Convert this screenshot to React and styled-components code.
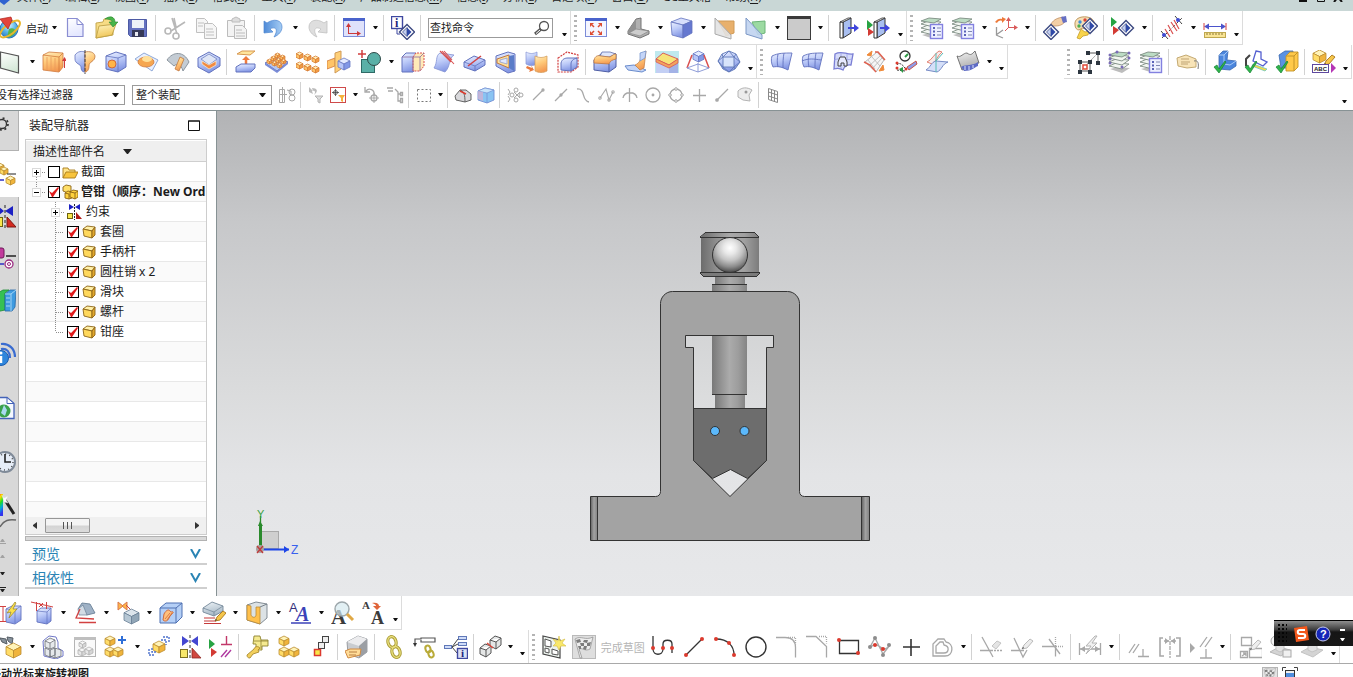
import React from "react";
import styled, { createGlobalStyle, css } from "styled-components";

const GlobalStyle = createGlobalStyle`
  * { box-sizing: border-box; }
  html, body { margin: 0; padding: 0; overflow: hidden; }
  body, button, input, select {
    font-family: "Noto Sans", "Noto Sans CJK SC", sans-serif;
    font-size: 11px;
    color: #1c1c1c;
  }
  button { border: 0; background: none; padding: 0; margin: 0; }
  svg { display: block; flex: none; }
`;

/* ---------- drawing helpers ---------- */

const Cube = ({ x, y, s, t = "#fff3b8", l = "#ffdc68", r = "#f0b43c", k = "#bb8d30" }) => (
  <g stroke={k} strokeWidth="0.8" strokeLinejoin="round">
    <path fill={t} d={`M${x} ${y + s / 4}l${s / 2} ${-s / 4} ${s / 2} ${s / 4} ${-s / 2} ${s / 4}z`} />
    <path fill={l} d={`M${x} ${y + s / 4}l${s / 2} ${s / 4}v${s / 2}l${-s / 2} ${-s / 4}z`} />
    <path fill={r} d={`M${x + s} ${y + s / 4}l${-s / 2} ${s / 4}v${s / 2}l${s / 2} ${-s / 4}z`} />
  </g>
);
const BlueCube = (p) => <Cube t="#e4ebff" l="#b7c6f8" r="#8298e6" k="#6878c4" {...p} />;
const OrangeCube = (p) => <Cube t="#ffedba" l="#ffc468" r="#f29c44" k="#d88038" {...p} />;
const GreyCube = (p) => <Cube t="#f6f6f6" l="#e8e8e8" r="#d6d6d6" k="#b4b4b4" {...p} />;
const WireCube = (p) => <Cube t="#eceef0" l="#d3d6da" r="#b4b8bd" k="#6b6f76" {...p} />;

const Diamond = ({ x, y }) => (
  <g transform={`translate(${x} ${y})`}>
    <path d="M0-7.500L7.500 0 0 7.500-7.500 0z" fill="#fff" stroke="#3b4880" strokeWidth="1.400" />
    <path d="M0-4.500v9L-4.500 0z" fill="#c3cff0" stroke="#2b3a78" strokeWidth="0.700" />
    <path d="M0-4.500v9L4.500 0z" fill="#2f49a8" />
  </g>
);

const Sheets = ({ c = "#7d8c82" }) => (
  <g stroke={c} strokeWidth="0.900">
    <path d="M2 19l8-2 12 1-8 5z" fill="#bdbdbd" stroke="none" />
    {[16, 12, 8].map((y) => (
      <path key={y} d={`M1 ${y}l7-3 13 1-7 5z`} fill="#f2f6f1" />
    ))}
    <path d="M1 5l8-3 12 1-7 4z" fill="#bcdcc4" />
  </g>
);
const ListCard = () => (
  <g>
    <rect x="10.500" y="8.500" width="12" height="14" fill="#eef0ff" stroke="#8381e0" strokeWidth="1.400" />
    <path d="M13 12h2M13 15.500h2M13 19h2" stroke="#5a62b8" strokeWidth="1.800" />
    <path d="M17 12h4M17 15.500h4M17 19h4" stroke="#8088b4" strokeWidth="1" />
  </g>
);
const Dots = ({ at, c = "#dc3a2e", r = 2 }) =>
  at.map(([x, y]) => <circle key={`${x}-${y}`} cx={x} cy={y} r={r} fill={c} />);
const PlayPair = ({ x = 0, y = 0 }) => (
  <g transform={`translate(${x} ${y})`}>
    <path d="M1 2l6 5-6 5z" fill="#27a343" />
    <path d="M3 11l6 4-6 5z" fill="#d33b34" />
  </g>
);
const Tick = () => <path d="M1 17l3-2 2 4 6-8 1 1-7 11z" fill="#2fb54b" stroke="#158132" strokeWidth="0.700" />;
const Pencil = ({ x, y, c = "#f5c64a", k = "#a9761c" }) => (
  <g transform={`translate(${x} ${y})`}>
    <path d="M0 10l2-4 6-6 3 2-6 7z" fill={c} stroke={k} strokeWidth="0.900" />
    <path d="M0 10l2-1-1-1z" fill="#333" />
  </g>
);
const Frame = ({ fill = "#f4f5ff" }) => (
  <g>
    <rect x="1.500" y="2.500" width="21" height="18" fill={fill} stroke="#7c8cd8" />
    <path d="M1 2h22v3H1z" fill="#4a63cc" />
  </g>
);
const Checker = ({ x = 0, y = 0, s = 1 }) => (
  <g transform={`translate(${x} ${y}) scale(${s})`}>
    <path d="M3 4c6-4 10 2 18-2l-3 12c-5 3-8-2-11 0l3 9H8z" fill="#ededed" stroke="#8d8d8d" strokeWidth="0.700" />
    <path d="M4 5l4-1 1 3-4 1zM12 5l4 0-1 3-4-1zM8 8l4 0 0 3-3 0zM15 8l4-1-1 4-3 0zM6 11l3 0 0 3-2 0zM12 11l3 0-1 4-3-1z" fill="#7d7d7d" />
  </g>
);

const G = "#a8a8a8";
const GREY = { stroke: G, strokeWidth: 1.3, fill: "none" };
const INK = { stroke: "#333", strokeWidth: 1.3, fill: "none" };

/* ---------- icons, 24 x 24 ---------- */

const ICONS = {
  nx: (
    <>
      <circle cx="12" cy="13" r="9" fill="url(#gGlobe)" stroke="#2b74b5" />
      <path d="M12 13c4-2 6 0 7 3-3 4-6 6-9 5z" fill="#57b44a" />
      <ellipse cx="13" cy="13" rx="12" ry="5" transform="rotate(-38 13 13)" fill="none" stroke="#e8b62d" strokeWidth="2" />
      <path d="M3 3l11-2 1 3-4 9z" fill="#e2453c" stroke="#b02019" strokeWidth="0.700" />
    </>
  ),
  new: (
    <>
      <path d="M3.500 2.500H13l6 6V20.500H3.500z" fill="url(#gPage)" stroke="#8a8ed2" strokeWidth="1.200" />
      <path d="M13 2.500v6h6z" fill="#fff" stroke="#8a8ed2" />
    </>
  ),
  open: (
    <>
      <path d="M1 7l7-1 1-3 9-1v17L1 22z" fill="#f7dc85" stroke="#bfa146" strokeWidth="0.900" />
      <path d="M1 22L4 10l17-2-4 11z" fill="url(#gYellow)" stroke="#bfa146" strokeWidth="0.900" />
      <path d="M10 3c5-4 10-2 10 3h3l-5 5-4-5h3c0-2-3-3-7-3z" fill="#48b54a" stroke="#2b8731" strokeWidth="0.600" />
    </>
  ),
  save: (
    <>
      <path d="M2.500 3.500h18v17H4.500l-2-2z" fill="#6472c0" stroke="#4d5aa4" />
      <path d="M6 4h12v8H6z" fill="#edf2f8" />
      <path d="M6 14h12v7H6z" fill="#363a58" />
      <path d="M9 16h3v4H9z" fill="#e7e9f0" />
    </>
  ),
  cut: (
    <g stroke="#b8b8b8" fill="none" strokeWidth="1.600">
      <path d="M9 2l5 16M22 6L8 15M11 2l2 9" />
      <circle cx="5" cy="15" r="3" />
      <circle cx="13" cy="20" r="3" />
    </g>
  ),
  copy: (
    <g stroke="#c0c0c0" fill="#f6f6f6">
      <path d="M2.500 2.500h8l3 3v11h-11z" />
      <path d="M10.500 7.500h8l4 4v11h-12z" />
      <path d="M4 7h6M4 10h5M12 13h7M12 16h8M12 19h8" />
    </g>
  ),
  paste: (
    <g stroke="#bcbcbc" fill="#f3f3f3">
      <path d="M2.500 4.500h17v16h-17z" />
      <path d="M7 6V3l4-2 4 2v3z" fill="#ddd" />
      <path d="M9.500 9.500h8l4 4v9h-12z" />
      <path d="M11 14h6M11 17h9M11 20h9" />
    </g>
  ),
  undo: <path d="M2 5l3 2c7-5 15-3 15 4 0 4-3 8-8 10 5-8 1-11-4-8l3 3-9 1z" fill="url(#gUndo)" stroke="#4f86d0" strokeWidth="0.700" />,
  redo: <path d="M22 5l-3 2c-7-5-15-3-15 4 0 4 3 8 8 10-5-8-1-11 4-8l-3 3 9 1z" fill="#dedede" stroke="#c0c0c0" strokeWidth="0.800" />,
  csysWin: (
    <>
      <Frame fill="#dfe2fb" />
      <path d="M6.500 17.500V9M6 17.500h11" stroke="#cc3a3a" fill="none" />
      <path d="M4 11l2.500-4 2.500 4zM15 15l4 2.500-4 2.500z" fill="#cc3a3a" />
    </>
  ),
  info: (
    <>
      <rect x="0.500" y="0.500" width="11" height="12" fill="#fff" stroke="#3f48a0" strokeWidth="1.400" />
      <text x="4" y="11" fontFamily="Liberation Serif, serif" fontWeight="bold" fontSize="12" fill="#20257c">i</text>
      <path d="M6 13v5h3" stroke="#3f48a0" fill="none" />
      <Diamond x={16} y={16} />
    </>
  ),
  fit: (
    <>
      <Frame />
      <path d="M8 9l2 2M16 9l-2 2M8 17l2-2M16 17l-2-2" stroke="#dd4b30" strokeWidth="1.500" />
      <path d="M6 7h4l-4 4zM18 7h-4l4 4zM6 19h4l-4-4zM18 19h-4l4-4z" fill="#dd4b30" />
    </>
  ),
  shade: (
    <>
      <path d="M1 15L9 3l5-1v11l8 2v3l-9 4-12-4z" fill="#b0b0b0" stroke="#747474" />
      <path d="M1 15l8-12v10l-6 4z" fill="#929292" />
      <path d="M9 13l13 2-9 5-11-3z" fill="#cdcdcd" stroke="#868686" strokeWidth="0.700" />
    </>
  ),
  solid: (
    <g stroke="#6272be" strokeWidth="0.800">
      <path d="M1 6l10-4 11 3-9 4z" fill="#d6defc" />
      <path d="M1 6l12 3v13L2 19z" fill="url(#gBlue)" />
      <path d="M13 9l9-4v12l-9 5z" fill="#6578d0" />
    </g>
  ),
  clipA: (
    <>
      <path d="M5 5h16v12l-8 3z" fill="#e8b06c" stroke="#d09a56" />
      <path d="M2 2l16 17v4L2 18z" fill="#e2e2e2" fillOpacity="0.900" stroke="#aaa" />
    </>
  ),
  clipB: (
    <>
      <path d="M8 6l13-1v12l-7 2z" fill="#9cdaa2" stroke="#6cb478" />
      <path d="M2 2l16 17v4L2 18z" fill="#c0d3f0" fillOpacity="0.900" stroke="#7c98c6" />
    </>
  ),
  swatch: (
    <>
      <rect x="0.500" y="0.500" width="23" height="23" fill="#cbcbcb" stroke="#3b3b3b" />
      <path d="M0 0h24v3H0z" fill="#3a3a3a" />
    </>
  ),
  doorOut: (
    <>
      <path d="M7 6l8-4v15l-8 5z" fill="#a9bff0" stroke="#333" />
      <path d="M4 6h3v16H4z" fill="#fff" stroke="#333" />
      <path d="M4 6l8-4h3L7 6z" fill="#fff" stroke="#333" strokeWidth="0.800" />
      <path d="M12 12h7" stroke="#3f46dc" strokeWidth="2" />
      <path d="M18 8l5 4-5 4z" fill="#3f46dc" />
    </>
  ),
  doorPlay: (
    <>
      <path d="M10 6l8-4v15l-8 5z" fill="#a9bff0" stroke="#333" />
      <path d="M7 6h3v16H7z" fill="#fff" stroke="#333" />
      <path d="M7 6l8-4h3l-8 4z" fill="#fff" stroke="#333" strokeWidth="0.800" />
      <path d="M0 4l6 5-6 5z" fill="#27a343" />
      <path d="M1 12l6 4-6 4z" fill="#d33b34" />
      <path d="M13 12h6" stroke="#3f46dc" strokeWidth="2" />
      <path d="M18 8l5 4-5 4z" fill="#3f46dc" />
    </>
  ),
  sheetList: (<><Sheets /><ListCard /></>),
  sheetPins: (
    <>
      <Sheets />
      <Dots c="#7a6cb8" r={1.5} at={[[2, 5], [9, 2], [21, 3], [2, 9], [21, 8], [2, 13], [14, 17]]} />
    </>
  ),
  orient: (
    <>
      <path d="M1 6c2-3 5-4 7-3V1l4 2-4 4V5C6 4 4 5 3 7z" fill="#ed7a3a" />
      <path d="M14.500 12V4M14 11.500h7M14 12l-3 3" stroke="#d95a5a" fill="none" />
      <path d="M12 5l2.500-4 2.500 4zM20 9l4 2.500-4 2.500z" fill="#d95a5a" />
      <path d="M2.500 19v-8M2 19l7 3M2 19l7-5" stroke="#999" strokeWidth="1.300" fill="none" />
    </>
  ),
  handDia: (
    <>
      <path d="M8 8c3-5 7-6 12-7l2 5c-4 4-7 4-12 4z" fill="#f3d0a6" stroke="#bf9164" strokeWidth="0.800" />
      <path d="M18 1l5-1 1 6-4 1z" fill="#6670c4" />
      <Diamond x={8} y={16} />
    </>
  ),
  palette: (
    <>
      <path d="M1 9C0 3 6 0 13 1c6 1 9 5 6 10l-7 2-4-1-3 2c-2 0-4-2-4-5z" fill="#f6dfb6" stroke="#bf9a62" />
      <Dots r={1.7} c="#3f8ed8" at={[[6, 6]]} />
      <Dots r={1.7} c="#dc4638" at={[[11, 4]]} />
      <Dots r={1.7} c="#4cb050" at={[[5, 10]]} />
      <path d="M3 22l4-9 4 3 4-1-1 4-5 1-3 3z" fill="#f8d44c" stroke="#bd931d" strokeWidth="0.700" />
      <g transform="translate(3 -6)"><Diamond x={13} y={16} /></g>
    </>
  ),
  playDia: (<><PlayPair y={-1} x={-1} /><Diamond x={15} y={12} /></>),
  redDim: (
    <>
      <path d="M2 22L22 2" stroke="#444" strokeDasharray="3 2" />
      <path d="M8 9l5 9M11 6l6 9M14 4l5 9M5 13l5 8" stroke="#d95050" strokeWidth="1.200" />
      <path d="M1 15l7 8M15 0l7 8" stroke="#444" />
      <Dots c="#3f4bd4" at={[[4, 19], [18, 4]]} />
    </>
  ),
  ruler: (
    <>
      <path d="M2 10.500h20" stroke="#4b53cc" />
      <path d="M1 10.500l5-3v6zM23 10.500l-5-3v6z" fill="#4b53cc" />
      <path d="M1 7v7M23 7v7" stroke="#d24141" />
      <rect x="1.500" y="16.500" width="21" height="5" fill="#f9e494" stroke="#bfa850" />
      <path d="M4 17v2M7 17v2M10 17v2M13 17v2M16 17v2M19 17v2" stroke="#8d7a38" />
    </>
  ),

  sheet: <path d="M1.500 2l18 4v17l-18-5z" fill="url(#gSheet)" stroke="#555" strokeWidth="1.200" />,
  extrude: (
    <>
      <path d="M1 5l6-3 14 1v14l-4 5-16-2z" fill="url(#gOrange)" stroke="#d07a3c" strokeWidth="0.800" />
      <path d="M1 5l16 2v14M17 7l4-4" fill="none" stroke="#d07a3c" strokeWidth="0.800" />
      <path d="M5 7v13M9 7v14M13 8v13" stroke="#e89a5c" fill="none" strokeWidth="0.800" />
      <path d="M22.500 18V10" stroke="#d13c3c" />
      <path d="M20 11l2.500-4 2.500 4z" fill="#d13c3c" />
    </>
  ),
  revolve: (
    <>
      <path d="M2 5c3-4 7-4 10-3v20c-3 0-4-2-4-5s-6-3-6-8z" fill="url(#gBlue)" stroke="#6272be" strokeWidth="0.800" />
      <path d="M12 2c5-1 9 0 10 4 0 6-6 5-6 10 0 4-2 6-4 6z" fill="url(#gOrange)" stroke="#bf7840" strokeWidth="0.800" />
      <path d="M12 0v24" stroke="#444" strokeDasharray="3 1.500" />
    </>
  ),
  hole: (
    <>
      <path d="M2 6l10-4 10 3v12l-8 5L2 19z" fill="url(#gBlue)" stroke="#6272be" />
      <path d="M2 6l12 2 8-3M14 8v14" fill="none" stroke="#6272be" strokeWidth="0.800" />
      <circle cx="8" cy="14" r="4" fill="#ffb548" stroke="#d06a3c" />
    </>
  ),
  boss: (
    <>
      <path d="M0 9l9-6 14 7-6 11z" fill="#e8f0ff" stroke="#8fa9d8" />
      <ellipse cx="11" cy="12" rx="8" ry="5" fill="#f5a650" stroke="#d07a3c" strokeWidth="0.800" />
      <ellipse cx="12" cy="9" rx="5" ry="3" fill="#ffe09a" />
    </>
  ),
  slot: (
    <>
      <path d="M1 10C7 1 18 1 23 12l-6 9c-2-7-6-8-9-5z" fill="#c4ccd4" stroke="#8c969f" />
      <path d="M9 19l5-12 4 2-5 12z" fill="url(#gOrange)" stroke="#bf7840" strokeWidth="0.800" />
    </>
  ),
  pocket: (
    <>
      <path d="M1 8l11-6 11 6v8l-11 7-11-6z" fill="url(#gBlue)" stroke="#6272be" />
      <path d="M4 9l8-5 8 5-8 6z" fill="#dfe6f6" stroke="#8494cc" />
      <path d="M5 11l7 4 7-4v4l-7 4-7-5z" fill="#f28a40" stroke="#fff0d0" strokeWidth="0.700" />
    </>
  ),
  pull: (
    <>
      <path d="M3 4l5-3h13l-5 4z" fill="#ffe59c" stroke="#d89850" />
      <path d="M12 15V9" stroke="#ef7b3e" strokeWidth="2.500" />
      <path d="M8 10l4-4 4 4z" fill="#ef7b3e" />
      <path d="M2 17l5-3h14v4l-4 4H2z" fill="url(#gBlue)" stroke="#6272be" />
    </>
  ),
  pattern: (
    <>
      <path d="M0 13l11-5 12 4-11 9z" fill="#b4c6f2" stroke="#6272be" />
      <path d="M0 13v2l12 8 11-9v-2l-11 9z" fill="#7a8cd8" />
      {[[2, 9], [6, 6], [10, 3], [7, 11], [11, 8], [15, 5], [12, 13], [16, 9]].map(([x, y]) => (
        <OrangeCube key={`${x}${y}`} x={x} y={y} s={5} />
      ))}
    </>
  ),
  cubes6: (
    <>
      {[[0, 2], [8, 4], [16, 6], [0, 12], [8, 14], [16, 16]].map(([x, y]) => (
        <OrangeCube key={`${x}${y}`} x={x} y={y} s={7} />
      ))}
    </>
  ),
  mirrorBody: (
    <>
      <path d="M0 11l8-3v8l-8 3z" fill="#ffc468" stroke="#d07a3c" strokeWidth="0.800" />
      <path d="M8 3l6-2v18l-6 4z" fill="#ffd078" stroke="#d09a56" />
      <BlueCube x={11} y={8} s={12} />
    </>
  ),
  unite: (
    <>
      <path d="M4 0v8M0 4h8" stroke="#d13c3c" strokeWidth="1.500" />
      <rect x="3.500" y="9.500" width="13" height="13" fill="#5ab0a7" stroke="#2f6a66" />
      <circle cx="16" cy="9" r="6.500" fill="#5ab0a7" stroke="#2f4a48" />
    </>
  ),
  trim: (
    <>
      <path d="M1 7l4-4h10v14l-3 5H1z" fill="url(#gBlue)" stroke="#6272be" />
      <path d="M12 7l3-4h8v13l-4 5h-7z" fill="#ffeab8" stroke="#d95050" strokeDasharray="2 1" />
      <path d="M1 7h11v14M12 7h7v14M19 7l4-4" fill="none" stroke="#8a6a9c" strokeWidth="0.800" />
    </>
  ),
  trimSheet: (
    <>
      <path d="M2 18C6 12 3 6 8 3l14 2c-6 4-3 11-9 17z" fill="url(#gBlue)" stroke="#8493d4" strokeWidth="0.800" />
      <path d="M8 1l11 11M12 1l8 9M10 1l12 13" stroke="#d95050" strokeWidth="1.100" />
    </>
  ),
  splitBody: (
    <>
      <path d="M1 12l10-6 11 4v5l-10 6-11-4z" fill="url(#gBlue)" stroke="#6272be" />
      <path d="M1 12l11 4 10-6M12 16v5" fill="none" stroke="#6272be" strokeWidth="0.800" />
      <path d="M5 16L18 6" stroke="#d24141" strokeWidth="1.500" />
    </>
  ),
  shell: (
    <>
      <path d="M2 6l12-4 7 2v17l-7 2-12-7z" fill="url(#gBlue)" stroke="#6272be" />
      <path d="M3 9l12-4v13l-12-5z" fill="#ffe09a" stroke="#bf7840" />
      <path d="M6 10l7-2v6l-7-2z" fill="#dfe8ff" stroke="#8494cc" strokeWidth="0.700" />
      <path d="M15 6l5-1v16l-5-3z" fill="#5a7cc8" />
    </>
  ),
  offsetFace: (
    <>
      <path d="M1 2c4 2 7 2 11 0v12c-4 2-7 2-11 0z" fill="url(#gBlue)" stroke="#8493d4" strokeWidth="0.700" />
      <path d="M10 6c4 2 8 2 12 0v15c-4 2-8 2-12 0z" fill="url(#gOrange)" stroke="#d09a56" strokeWidth="0.700" />
      <path d="M2 16l5 2-1-3 3 5-5 2 1-2-4-2z" fill="#e8783c" />
    </>
  ),
  scaleBody: (
    <>
      <path d="M2 8l9-6 11 3v12l-7 5H2z" fill="none" stroke="#d24141" strokeDasharray="2 1" strokeWidth="1.200" />
      <path d="M5 20v-7c1-4 4-5 7-5h9v9l-6 4z" fill="url(#gBlue)" stroke="#6272be" />
      <path d="M15 21v-7c0-3 2-5 6-6" fill="none" stroke="#6272be" />
    </>
  ),
  blend: (
    <>
      <path d="M1 10l8-7 14 1v13l-7 5-15-2z" fill="url(#gBlue)" stroke="#4f5ea4" />
      <path d="M9 2h8l6 2-7 3-9-1z" fill="#dfe6fb" stroke="#4f5ea4" strokeWidth="0.700" />
      <path d="M1 10c1-4 4-5 7-4l9 1c3-2 4-3 6-3v5c-4 1-6 2-7 5l-15-1z" fill="url(#gOrange)" stroke="#bf7840" strokeWidth="0.800" />
      <path d="M16 22v-8" stroke="#4f5ea4" />
    </>
  ),
  faceBlend: (
    <>
      <path d="M1 16l9-1 12 5-4 2-14-2z" fill="#c4d5f8" stroke="#6a8ccc" />
      <path d="M11 15c5-2 6-6 6-11l5-3-2 17-4 2z" fill="url(#gOrange)" stroke="#bf7840" strokeWidth="0.700" />
      <path d="M16 3l6-2-1 7-5 3z" fill="#c4d5f8" stroke="#6a8ccc" strokeWidth="0.700" />
    </>
  ),
  chamfer: (
    <>
      <rect x="0" y="1" width="24" height="22" fill="#bfe9ee" />
      <path d="M1 10l13 5v8H1z" fill="#c3cff4" />
      <path d="M14 15l9-5v13h-9z" fill="#a3b2e6" />
      <path d="M1 9L8 3l15 6-9 6z" fill="#f6e47a" stroke="#d95050" strokeWidth="0.900" />
      <path d="M1 9v3l13 6 9-5V9l-9 6z" fill="#f2a35c" stroke="#d95050" strokeWidth="0.700" />
    </>
  ),
  draft: (
    <>
      <BlueCube x={7} y={1} s={11} />
      <path d="M6 5L1 18M18 5l5 13" stroke="#d95050" strokeWidth="1.500" />
      <path d="M1 18l11 4 11-4M12 13v9M1 18l11-4 11 4" stroke="#8493d4" strokeWidth="0.900" fill="none" />
    </>
  ),
  facet: (
    <g stroke="#6078b8" strokeWidth="0.900">
      <path d="M5 4l7-3 7 3 4 8-5 7-6 3-6-3-5-8z" fill="url(#gBlue)" />
      <path d="M6 7h11v10H6z" fill="#d8e4fb" />
      <path d="M12 1L6 7 1 11l5 6 6 5 5-5 6-5-6-5zM5 4l1 3M19 4l-2 3M6 17v2M17 17l1 2" fill="none" />
    </g>
  ),
  surfA: (
    <g stroke="#6272be" strokeWidth="0.900">
      <path d="M2 6C8 3 14 3 22 3l-4 17c-6-3-10-4-15-3-2-4-2-8-1-11z" fill="url(#gBlue)" />
      <path d="M8 4c-1 5-1 9 0 13M14 3c-1 5-1 10-1 15" fill="none" />
    </g>
  ),
  surfB: (
    <g stroke="#6272be" strokeWidth="0.900">
      <path d="M2 6C8 3 14 3 22 3l-4 17c-6-3-10-4-15-3-2-4-2-8-1-11z" fill="url(#gBlue)" />
      <path d="M8 4c-1 5-1 9 0 13M15 3c-1 5-1 10-1 15M1 11c7-3 12-2 19-1" fill="none" />
    </g>
  ),
  surfC: (
    <>
      <path d="M3 4c7-4 11 1 18 0l-2 11c-4-1-7 2-8 5-3-2-6-2-9-1z" fill="#d5dbfa" stroke="#7a7ed4" strokeWidth="1.300" />
      <path d="M2 10c7-3 12 1 18-1M9 3v16M15 4v12" stroke="#9aa0e4" fill="none" strokeWidth="0.800" />
      <path d="M6 16v-4l2-5h5l2 5v4h-3v-3H9v3z" fill="#e7eaff" stroke="#444" />
    </>
  ),
  surfD: (
    <>
      <path d="M2 12L14 2l7 8-8 12z" fill="#f6f6f6" stroke="#b4b4b4" />
      <path d="M5 10l7 9M9 7l8 9M6 16l11-10M9 19l10-11" stroke="#b4b4b4" strokeWidth="0.800" />
      <path d="M12 2l3 0 7 8M1 12l6 3 6 7" stroke="#e0604e" fill="none" strokeWidth="1.400" />
      <path d="M4 5l5-4-1 5zM16 21l4-6 1 5z" fill="#ef8a3a" stroke="#ef8a3a" />
    </>
  ),
  fitCurve: (
    <>
      <circle cx="11" cy="6" r="5" fill="#fff" stroke="#333" strokeWidth="1.300" />
      <path d="M11 7l3-3" stroke="#2c9a44" strokeWidth="2" />
      <path d="M3 15c2-3 5-1 8 3M3 20l8 1" stroke="#333" fill="none" strokeDasharray="2 1" />
      <Dots at={[[3, 13], [12, 19], [3, 18]]} r={1.500} />
      <path d="M5 19l4-2v6z" fill="#2c9a44" />
      <path d="M13 17l9-6 1 3-8 6z" fill="#8f9ce8" stroke="#c64a3a" strokeWidth="0.900" />
    </>
  ),
  cross: (
    <>
      <path d="M2 12C7 10 9 4 14 1l3 1c-5 4-5 9-10 12z" fill="#f8eaea" stroke="#e07868" strokeWidth="0.900" />
      <path d="M1 20c5-3 5-8 10-9l12 1c-6 2-6 8-11 10z" fill="#d5dff8" stroke="#6a80c0" strokeWidth="0.900" />
      <path d="M11 11l7-8M11 3v10l0 9" stroke="#56bab4" strokeWidth="1" />
    </>
  ),
  quilt: (
    <>
      <path d="M1 6c4 2 6-3 10-3 4 3 5 1 8-2l4 12c-4 0-5 5-9 4-3-1-5 2-8 3z" fill="url(#gGrey)" stroke="#666" strokeWidth="0.900" />
      <path d="M5 17c5-3 12-1 17-5v4c-5 2-6 5-14 5z" fill="#5f6cc4" />
      <path d="M9 16v4M13 16v4M17 15v3" stroke="#dfe3ff" />
    </>
  ),
  transform: (
    <>
      <g fill="none" stroke="#555"><path d="M11 3h10v9M3 12h10v9H3z" /></g>
      <path d="M5 20l7-8 8-8" stroke="#999" strokeDasharray="1 1" />
      <rect x="6" y="15" width="4" height="4" fill="#fff" stroke="#e24b3a" strokeWidth="1.500" />
      <g fill="#2d3640">
        {[[9, 1], [19, 1], [19, 11], [1, 10], [11, 10], [1, 20], [11, 20]].map(([x, y]) => (
          <rect key={`${x}-${y}`} x={x} y={y} width="4" height="4" />
        ))}
      </g>
    </>
  ),
  tag: (
    <>
      <path d="M1 8l9-3 10 4v8l-9 1-9-2z" fill="#f8e4b8" stroke="#c4aa72" />
      <path d="M5 9h8M5 12h9M5 14h7" stroke="#bfa474" />
      <path d="M18 11c4-1 5 2 4 8" stroke="#777" fill="none" />
    </>
  ),
  checkPart: (
    <>
      <path d="M6 5l4-4h5l-1 9 9 1v5l-6 4-11-1z" fill="#4b86dd" stroke="#3a67b0" strokeWidth="0.800" />
      <path d="M6 5h5v9M11 14l6 1 6-4M11 5l4-4" stroke="#a9cbf7" fill="none" />
      <Tick />
    </>
  ),
  checkSketch: (
    <>
      <path d="M12 1l5 1v7l6 3-4 4-10-5z" fill="#fff" stroke="#5560d0" strokeWidth="1.300" />
      <path d="M2 16V9l4-4" stroke="#444" strokeWidth="2" fill="none" />
      <path d="M9 14l14 5-2 2-13-5z" fill="#f6d84a" stroke="#6cc8c0" strokeWidth="0.800" />
      <Tick />
    </>
  ),
  checkAsm: (
    <>
      <path d="M4 5l6-4h8v17H6z" fill="#5b92e2" stroke="#3a67b0" strokeWidth="0.800" />
      <path d="M11 6l4-4h8v15l-4 4h-8z" fill="#ffc94a" stroke="#c49428" strokeWidth="0.900" />
      <path d="M11 6h8v15M19 6l4-4" stroke="#c49428" fill="none" />
      <Tick />
    </>
  ),
  cubeAbc: (
    <>
      <Cube x={1} y={0} s={13} />
      <Pencil x={12} y={5} />
      <rect x="0.500" y="14.500" width="16" height="8" fill="#fff" stroke="#5f489e" />
      <text x="2" y="21" fontFamily="Liberation Sans, sans-serif" fontWeight="bold" fontSize="6" fill="#1c1c1c">ABC</text>
      <path d="M19 13l5 5-5 5z" fill="#b536b5" />
    </>
  ),

  dimCube: (
    <>
      <path d="M7 8l6-3h9v14l-6 4-9-2z" fill="url(#gBlue)" stroke="#6272be" strokeWidth="0.900" />
      <path d="M7 8l9 1 6-4M16 9v13" fill="none" stroke="#6272be" strokeWidth="0.700" />
      <path d="M0 5.500h7M0 20.500h7M4 6v14" stroke="#d24141" />
      <path d="M16 1L8 12l4-1-2 6 8-9h-4l3-6z" fill="#fbe14a" stroke="#94812b" strokeWidth="0.700" />
    </>
  ),
  dimLen: (
    <>
      <path d="M7 10l4-3h10v13l-4 3-10-2z" fill="url(#gBlue)" stroke="#6272be" strokeWidth="0.900" />
      <path d="M7 10l10 1 4-4M17 11v12" fill="none" stroke="#6272be" strokeWidth="0.700" />
      <path d="M1 1l22 5M6.500 1v9M16.500 1v7" stroke="#d24141" />
      <path d="M9 2l4 4M13 2l-4 4" stroke="#d24141" />
    </>
  ),
  dimAngle: (
    <>
      <path d="M5 8l4-6 8 1 5 9-8 2z" fill="#9fb2c6" stroke="#6a8096" strokeWidth="0.900" />
      <path d="M5 8l1 6 8 0-4-10z" fill="#d2dce5" stroke="#6a8096" strokeWidth="0.700" />
      <path d="M7 8L3 17l18 1M6 21.500h17" stroke="#d24141" fill="none" strokeWidth="1.300" />
    </>
  ),
  weld: (
    <>
      <path d="M2 1l5 4-5 4zM11 1L6 5l5 4z" fill="#ffb548" stroke="#d87a4c" />
      <path d="M10 4l7 7" stroke="#d24141" />
      <Cube x={8} y={8} s={15} t="#dce5ec" l="#b6c7d4" r="#91a6b7" k="#6a8096" />
    </>
  ),
  section: (
    <>
      <path d="M1 7l6-5h16v14l-6 6H1z" fill="#b4cff6" stroke="#4f70b2" />
      <path d="M1 7h16v15M17 7l6-5" fill="none" stroke="#4f70b2" />
      <path d="M5 13c2-4 5-5 6-3s2 0 3 1-3 3-4 6-4 4-6 2z" fill="#ffc07c" stroke="#d06a3c" />
      <path d="M6 18l5-6M8 19l5-7" stroke="#d06a3c" strokeWidth="0.800" />
    </>
  ),
  note: (
    <>
      <path d="M1 7l9-6 11 4v5l-9 5-11-4z" fill="url(#gSteel)" stroke="#75899a" strokeWidth="0.900" />
      <path d="M1 7l11 4 9-6M12 11v4" fill="none" stroke="#75899a" strokeWidth="0.800" />
      <path d="M2 17h11M2 20h12M2 22.500h17" stroke="#c63a3a" strokeWidth="1.100" />
      <Pencil x={13} y={10} />
    </>
  ),
  holeNote: (
    <>
      <path d="M2 4l9-3 11 2v14l-7 6-13-4z" fill="#dce2e5" stroke="#77818a" strokeWidth="0.900" />
      <path d="M2 4l4 1v9c1 3 5 3 5 0V6l4 0v17L2 19z" fill="#ffc04c" stroke="#b98a38" strokeWidth="0.800" />
      <path d="M15 6l7-3" stroke="#77818a" />
    </>
  ),
  fontA: (
    <>
      <text x="1" y="11" fontFamily="Liberation Sans, sans-serif" fontSize="13" fill="#35307c">A</text>
      <text x="8" y="20" fontFamily="Liberation Serif, serif" fontStyle="italic" fontWeight="bold" fontSize="20" fill="#3b42b8">A</text>
      <path d="M3 22h20" stroke="#3b42b8" strokeWidth="1.500" />
    </>
  ),
  findA: (
    <>
      <text x="0" y="23" fontFamily="Liberation Serif, serif" fontWeight="bold" fontSize="21" fill="#3b3b3b">A</text>
      <circle cx="11" cy="8" r="7" fill="#d6eaf0" fillOpacity="0.700" stroke="#9ca6aa" strokeWidth="1.400" />
      <path d="M16 13l6 6" stroke="#e0a845" strokeWidth="3" />
    </>
  ),
  growA: (
    <>
      <text x="0" y="8" fontFamily="Liberation Serif, serif" fontWeight="bold" fontSize="11" fill="#3b3b3b">A</text>
      <text x="9" y="23" fontFamily="Liberation Serif, serif" fontWeight="bold" fontSize="18" fill="#3b3b3b">A</text>
      <path d="M10 2c5-1 7 1 7 3h2l-4 4-4-4h3c0-1-1-2-4-3z" fill="#e0653a" />
    </>
  ),

  findPart: (
    <>
      <path d="M1 3l6 1 1 5-5-2zM8 2l6 1-1 6-4-3z" fill="#87929c" stroke="#545c64" />
      <Cube x={7} y={8} s={15} />
    </>
  ),
  stackWire: (
    <>
      <path d="M1 6l6-5 7 1 2 5v6l5 3v5l-7 3-12-3z" fill="#fff" stroke="#7078c8" />
      <g fill="#e6e9ec" stroke="#6b6f76" strokeWidth="0.800">
        <path d="M3 6l5-3 5 2v7l-5 2-5-2zM3 6l5 2 5-3M8 8v6" />
        <path d="M3 13l5 2v7l-5-2zM8 15l5-2v7l-5 2zM13 13l6 2v6l-6 2-5-2M13 13v10" />
      </g>
    </>
  ),
  winCubes: (
    <>
      <rect x="1.500" y="2.500" width="21" height="19" fill="#fafafa" stroke="#b4b4b4" />
      <path d="M1 2h22v3H1z" fill="#bfbfbf" />
      <GreyCube x={6} y={6} s={7} /><GreyCube x={5} y={13} s={8} /><GreyCube x={12} y={12} s={8} />
    </>
  ),
  addPart: (
    <>
      <Cube x={1} y={1} s={10} /><Cube x={1} y={12} s={10} /><Cube x={9} y={12} s={10} />
      <path d="M18 1v8M14 5h8" stroke="#2f6fd8" strokeWidth="2" />
    </>
  ),
  movePart: (
    <>
      <Cube x={6} y={6} s={12} />
      <path d="M16 2h6v6M14 5h5v5M2 14v6h6M5 13v4h5" fill="none" stroke="#4c70cc" strokeWidth="1.400" strokeDasharray="2 1" />
    </>
  ),
  mirrorPart: (
    <>
      <path d="M4 1l7 5-7 5zM20 1l-7 5 7 5z" fill="#4447d0" />
      <path d="M12 0v24" stroke="#333" strokeDasharray="3 2" />
      <rect x="2.500" y="14.500" width="7" height="8" fill="#f8e86a" stroke="#7d7220" />
      <path d="M14 13l9 10h-9z" fill="#d0483f" stroke="#8d2a24" strokeWidth="0.800" />
    </>
  ),
  constrain: (
    <>
      <PlayPair x={-1} y={2} />
      <path d="M17.500 1v8M12 9.500h11" stroke="#c2386a" strokeWidth="1.400" />
      <path d="M12 22l6-7M16 22l6-7" stroke="#b03aa0" strokeWidth="1.400" />
    </>
  ),
  wrenchPart: (
    <>
      <path d="M8 1h6l1 4h7v6h-6v4h-6V9l-3 0z" fill="#f5ea90" stroke="#8d8230" strokeWidth="0.900" />
      <path d="M8 6h14M15 5v9" stroke="#8d8230" strokeWidth="0.800" />
      <path d="M1 20l7-6c1-3 4-3 6-1l-2 2 1 2-6 2-3 4c-2 0-3-1-3-3z" fill="#f2cf5c" stroke="#a98a30" strokeWidth="0.900" />
    </>
  ),
  cubes3: (<><Cube x={2} y={1} s={10} /><Cube x={2} y={12} s={10} /><Cube x={12} y={12} s={10} /></>),
  squares: (
    <>
      <rect x="14.500" y="1.500" width="6" height="6" fill="#eee" stroke="#444" />
      <rect x="10.500" y="7.500" width="6" height="6" fill="#eee" stroke="#444" />
      <rect x="6.500" y="14.500" width="6" height="6" fill="#f8e64a" stroke="#dc3a2e" strokeWidth="1.500" />
    </>
  ),
  tagCube: (
    <>
      <path d="M2 7l11-6 9 3v13l-8 6-11-4z" fill="#c9ccd0" stroke="#888c92" strokeWidth="0.800" />
      <path d="M2 7l11-6 9 3-8 7z" fill="#ececee" />
      <path d="M14 11l8-7v13l-8 6z" fill="#9c9fa4" />
      <path d="M0 16l5-2 11 0-1 6-12 3z" fill="#ffdc98" stroke="#d08a42" />
      <path d="M4 17h8M4 20h7" stroke="#b87e42" />
    </>
  ),
  chain: (
    <g fill="none">
      <g stroke="#a89a34" strokeWidth="3.200">
        <ellipse cx="10" cy="7" rx="4" ry="5.500" transform="rotate(-15 10 7)" />
        <ellipse cx="14" cy="17" rx="4" ry="5.500" transform="rotate(-15 14 17)" />
      </g>
      <g stroke="#e6dc7a" strokeWidth="1.500">
        <ellipse cx="10" cy="7" rx="4" ry="5.500" transform="rotate(-15 10 7)" />
        <ellipse cx="14" cy="17" rx="4" ry="5.500" transform="rotate(-15 14 17)" />
      </g>
    </g>
  ),
  routeChain: (
    <>
      <path d="M2 9V4h6v-1h14v4H8V5" fill="#fff" stroke="#555" strokeWidth="1.200" />
      <path d="M0 8h4l-2 4z" fill="#333" />
      <g fill="none" stroke="#b9ab39" strokeWidth="2">
        <ellipse cx="15" cy="14" rx="2.500" ry="3.500" transform="rotate(-20 15 14)" />
        <ellipse cx="18" cy="19" rx="2.500" ry="3.500" transform="rotate(-20 18 19)" />
      </g>
    </>
  ),
  treeInfo: (
    <>
      <path d="M0 12h8l6-8M8 12l6-3M8 12l5 6" stroke="#444" fill="none" />
      <g fill="#cfdcf8" stroke="#6078b8">
        <rect x="14.500" y="1.500" width="8" height="3" /><rect x="14.500" y="7.500" width="8" height="3" /><rect x="0.500" y="10.500" width="7" height="3" />
      </g>
      <rect x="13.500" y="13.500" width="10" height="10" fill="#dde2f4" stroke="#3f48a0" strokeWidth="1.400" />
      <text x="17" y="22" fontFamily="Liberation Serif, serif" fontWeight="bold" fontSize="11" fill="#20257c">i</text>
    </>
  ),
  wirePair: (
    <>
      <g fill="#e4e6e6" stroke="#555" strokeWidth="1">
        <path d="M11 5l5-4 6 2v7l-5 4-6-3zM11 5l6 2 5-4M17 7v7" />
        <path d="M1 13l5-4 6 2v7l-5 4-6-3zM1 13l6 2 5-4M7 15v7" />
      </g>
      <path d="M8 8l6 5" stroke="#dc4a3e" strokeWidth="1.500" />
    </>
  ),
  sketchNew: (
    <>
      <path d="M1 1l17 4v18L1 19z" fill="#edf3ee" stroke="#444" strokeWidth="1.200" />
      <path d="M3 4l6 2v6l-6-1zM3 13l4 1v4l-4-1zM10 14l6 2v4l-6-1z" fill="#fff" stroke="#555" />
      <path d="M17 1l1 5 5-2-3 4 4 3-5 0-2 4-2-4-4 0 3-3-3-4 5 2z" fill="#f9e86a" stroke="#d4bc42" strokeWidth="0.600" />
    </>
  ),
  finish: (
    <>
      <rect x="0.500" y="0.500" width="23" height="23" fill="#dedede" stroke="#bababa" />
      <Checker />
    </>
  ),
  profile: (
    <>
      <path d="M2 1v13c0 7 10 7 10 0V9c0-5 9-5 9 0v9" {...INK} />
      <Dots at={[[2, 13], [12, 13], [21, 13]]} />
    </>
  ),
  line: (<><path d="M4 20L20 4" {...INK} /><Dots at={[[4, 20], [20, 4]]} /></>),
  arc: (<><path d="M3 4c12 0 18 7 18 16" {...INK} /><Dots at={[[3, 4], [16, 8], [21, 20]]} /></>),
  circle: <circle cx="12" cy="12" r="10" {...INK} strokeWidth={1.400} />,
  fillet: (<><path d="M1 2.500h9c7 0 10.500 4 10.500 10v10" {...GREY} /><path d="M13 2.500h7.500v7" {...GREY} strokeDasharray="1 1" /></>),
  cham: (<><path d="M0 1.500h10l10.500 10v11" {...GREY} /><path d="M13 1.500h7.500v7" {...GREY} strokeDasharray="1 1" /></>),
  rect: (<><path d="M2.500 5.500h19v13h-19z" {...INK} /><Dots at={[[2, 5], [21, 18]]} /></>),
  spline: (
    <>
      <path d="M2 12L7 3l8 16 7-9M3 12c4-5 7-1 11 1s5 0 8-3" {...GREY} />
      <Dots c="#8d8d8d" at={[[2, 12], [7, 3], [15, 20], [21, 10]]} />
      <Dots at={[[7, 10], [15, 14]]} />
    </>
  ),
  point: <path d="M12 4v17M4 12h17" {...INK} strokeWidth={1.600} />,
  offset: (
    <g {...GREY}>
      <path d="M3 21V9l5-5h6l2 3c8 1 8 14-1 14z" />
      <path d="M6 18v-7l4-4h3l1 3c6 1 5 8 0 8z" />
    </g>
  ),
  qtrim: (
    <>
      <path d="M3 2l11 20M1 15.500h11" {...GREY} /><path d="M12 15.500h11" {...GREY} strokeDasharray="2 1" />
      <path d="M13 11l5-5 4 2-5 6z" fill="#e4e4e4" stroke="#c4c4c4" />
    </>
  ),
  qext: (<><path d="M1 15.500h13M4 3l9 19L17 15" {...GREY} /><Pencil x={12} y={4} c="#ececec" k="#b4b4b4" /></>),
  corner: (<><path d="M1 11.500h13.500v10M8 4l11 15" {...GREY} /><path d="M14.500 2v9.500H23" {...GREY} strokeDasharray="1 1" /></>),
  autoDim: (
    <>
      <path d="M1.500 8v12M22.500 8v12M2 14h20" {...GREY} />
      <path d="M2 14l5-3v6zM22 14l-5-3v6z" fill={G} />
      <path d="M17 1L8 11l5 0-5 8 11-11h-5l5-7z" fill="#f0f0f0" stroke="#b4b4b4" />
    </>
  ),
  geoCon: <path d="M2 18L8 9M6 18l6-9M16 14v7M11 21.500h11" {...GREY} />,
  symm: (
    <>
      <path d="M5 3H2v18h4M18 3h4v18h-4" {...GREY} strokeWidth={1.600} /><path d="M12 1v22" {...GREY} strokeDasharray="4 1" />
      <path d="M6 6h5M18 6h-5" {...GREY} /><path d="M7 3v6l4-3zM17 3v6l-4-3z" fill={G} />
    </>
  ),
  autoCon: (<><path d="M1 8l5 5-5 5z" fill={G} /><path d="M11 12l7-10M16 12l7-10M17 14v9M11 23h12" {...GREY} /></>),
  convert: (
    <>
      <path d="M3.500 2.500h10v8h-10zM11.500 13.500h13v9h-13zM2.500 16.500h7v6h-7z" {...GREY} /><path d="M4 21l4-3M5 18h3v3" {...GREY} />
      <Pencil x={12} y={5} c="#eee" k="#b4b4b4" />
    </>
  ),
  lockPart: (
    <>
      <circle cx="7" cy="6" r="5" fill="#f4f4f4" stroke={G} />
      <path d="M1 17l9-5 11 3-9 6z" fill="#d4d4d4" stroke="#b8b8b8" /><path d="M7 8h8v7l-4 2-4-2z" fill="#e2e2e2" stroke="#c4c4c4" />
      <rect x="14" y="15" width="8" height="7" fill="#f0f0f0" stroke={G} />
    </>
  ),
  partDown: (<><path d="M1 17l9-5 13 3-10 7z" fill="#d4d4d4" stroke="#c4c4c4" /><path d="M8 6l4-2 5 2v9l-5 2-4-2z" fill="#e2e2e2" stroke="#c4c4c4" /></>),

  /* side bar, 24 x 24 */
  gear: (
    <>
      <circle cx="10" cy="12" r="4.500" fill="none" stroke="#333" strokeWidth="1.300" />
      <circle cx="10" cy="12" r="6" fill="none" stroke="#333" strokeWidth="1.700" strokeDasharray="2 2.700" />
    </>
  ),
  asmNav: (
    <>
      <Cube x={3} y={1} s={9} /><Cube x={8} y={5} s={8} /><Cube x={14} y={14} s={9} />
      <path d="M15 12h9" stroke="#222" /><path d="M8 18h4" stroke="#2b2fc4" strokeWidth="1.500" />
    </>
  ),
  conNav: (
    <>
      <path d="M6 1l6 5-6 5zM21 1l-8 5 8 5z" fill="#1c20c4" />
      <path d="M13 0v24" stroke="#222" strokeDasharray="3 2" />
      <rect x="5.500" y="12.500" width="5" height="9" fill="#f8e64a" stroke="#6d6210" />
      <path d="M15 12l9 10h-9z" fill="#d42a20" stroke="#7d1612" />
    </>
  ),
  reuse: (
    <>
      <rect x="4" y="2" width="8" height="10" rx="2" fill="#c23a9c" stroke="#6e1858" />
      <path d="M14 10h10" stroke="#222" strokeWidth="1.500" /><path d="M8 18h4" stroke="#2b2fc4" strokeWidth="1.500" />
      <circle cx="17" cy="18" r="4" fill="#fff" stroke="#9a2a80" strokeWidth="1.300" /><circle cx="17" cy="18" r="1.500" fill="none" stroke="#9a2a80" />
    </>
  ),
  books: (
    <>
      <path d="M4 5l7-4h6l-4 3v17l-9 2z" fill="#36c052" stroke="#1d8a33" strokeWidth="0.800" />
      <path d="M13 5l5-4h6l-1 17-3 4h-7z" fill="#3f9be0" stroke="#2468a8" strokeWidth="0.800" />
      <path d="M13 5h6v17M19 5l5-4M14 9h4M14 13h4M14 17h4" fill="none" stroke="#a4d4f4" />
    </>
  ),
  hd3d: (
    <>
      <g fill="none" stroke="#3a6cd0" strokeWidth="2.200"><path d="M9 7c6-1 9 3 9 9M9 2c8-1 14 5 14 13" /></g>
      <circle cx="9" cy="16" r="7.500" fill="#2f86dc" stroke="#1a5cae" />
      <path d="M9 14v7" stroke="#fff" strokeWidth="2.500" /><circle cx="9" cy="11" r="1.500" fill="#fff" />
    </>
  ),
  web: (
    <>
      <path d="M3 1.500h12l7 6v15H3z" fill="#f5f8ff" stroke="#4463b8" strokeWidth="1.300" /><path d="M15 1.500v6h7z" fill="#fff" stroke="#4463b8" />
      <circle cx="12" cy="15" r="6.500" fill="#3aa14c" /><path d="M12 9l3 5-2 6-4-3z" fill="#a9daf0" />
    </>
  ),
  clock: (
    <>
      <circle cx="13" cy="12" r="10" fill="#e6edf7" stroke="#7f8a98" strokeWidth="2" />
      <circle cx="13" cy="12" r="8" fill="none" stroke="#444" strokeWidth="1.300" strokeDasharray="1 3.190" />
      <path d="M13 4v8h6" stroke="#222" fill="none" strokeWidth="1.600" />
    </>
  ),
  roles: (
    <>
      <path d="M6 1h5v22H6z" fill="url(#gRainbow)" />
      <path d="M13 7l9 14" stroke="#222" strokeWidth="3" /><path d="M10 2l2 3 4-2-2 4 2 3-4-1z" fill="#fff" stroke="#ddd" strokeWidth="0.500" />
    </>
  ),
};

/* ---------- icons, 18 x 18 ---------- */

const SMALL = {
  asmFilter: <g {...GREY} strokeWidth={1}><path d="M1.500 3.500h5v13h-5zM1 8.500h8M4.500 1v15M9 4l4 1v4" /><circle cx="14" cy="6" r="3" /><circle cx="14" cy="12" r="3" /></g>,
  funnelUndo: <g><path d="M2 1l4 4-1-3c5 0 7 3 2 7 2-3 1-5-2-4l1 3-4-2z" fill="#bbb" /><path d="M8 10h8l-3 3v4l-2-1v-3z" fill="#ddd" stroke="#b4b4b4" /></g>,
  snapFilter: <g><rect x="0.500" y="1.500" width="15" height="15" fill="#fff" stroke="#cf4a4a" /><circle cx="5.500" cy="6.500" r="2" fill="none" stroke="#444" strokeWidth="0.800" /><path d="M5.500 3v7M2 6.500h7" stroke="#444" strokeWidth="0.800" /><path d="M8 9h7l-2 3v4l-2-1v-3z" fill="#f5b13c" /></g>,
  snapUndo: <g {...GREY}><path d="M3 5c3-4 9-1 8 4M2 1v5h5" /><circle cx="11" cy="12" r="3" /><path d="M11 7v10M6 12h10" strokeWidth="1" /></g>,
  treeUndo: <g {...GREY}><path d="M1 2l6 0M2 5h5M9 3l3 3v9h3M12 8h3" /><path d="M14.500 6.500h2v3h-2zM14.500 12.500h2v4h-2z" fill="#ddd" /></g>,
  marquee: <path d="M2.500 3.500h13v12h-13z" {...GREY} stroke="#777" strokeWidth={1} strokeDasharray="2 2" />,
  faceSel: <g><path d="M1 10l5-6 6 0 5 4v6l-6 2-9-2z" fill="#d8d8db" stroke="#555" strokeWidth="0.900" /><path d="M6 4c4 1 5 5 5 12" fill="none" stroke="#555" strokeWidth="0.900" /><path d="M6 5l6 3" stroke="#dc3a2e" strokeWidth="1.400" /></g>,
  bodySel: <g><path d="M1 5l7-3 9 2v10l-7 3-9-3z" fill="#8ac4f2" stroke="#7490d4" strokeWidth="0.900" /><path d="M1 5l9 2 7-3-9-2z" fill="#c9e4fa" stroke="#7490d4" strokeWidth="0.700" /><path d="M1 5l5 1v9l-5-2z" fill="#d9b0d0" fillOpacity="0.700" /><path d="M10 7v10" stroke="#7490d4" strokeWidth="0.700" /></g>,
  snapAll: <g {...GREY} strokeWidth={1}><path d="M2 3l2 3-2 3M2 10l2 3-2 3" /><circle cx="10" cy="4" r="2" /><circle cx="10" cy="14" r="2" /><circle cx="6" cy="9" r="2" /><circle cx="15" cy="9" r="2" /><path d="M8 6l6 6M8 12l6-6" /></g>,
  endPt: <g {...GREY}><path d="M4 14L14 4" /><circle cx="14" cy="4" r="1" /></g>,
  midPt: <g {...GREY}><path d="M3 15L15 3" /><circle cx="9" cy="9" r="1" fill={G} /></g>,
  ctrlPt: <path d="M2 3c9-1 4 12 12 13" {...GREY} />,
  polePt: <g {...GREY} strokeWidth={1.100}><path d="M2 12L8 3l3 11 4-8" /><circle cx="2" cy="12" r="1.200" /><circle cx="11" cy="14" r="1.200" /><circle cx="15" cy="6" r="1.200" /></g>,
  interPt: <path d="M8.500 2v14M2 12C3 5 15 5 16 12" {...GREY} />,
  centerPt: <g {...GREY}><circle cx="9" cy="9" r="7" /><circle cx="9" cy="9" r="0.800" fill={G} /></g>,
  quadPt: <g {...GREY}><circle cx="9" cy="9" r="6" /><g fill="#fff" strokeWidth="1"><circle cx="9" cy="3" r="1.300" /><circle cx="9" cy="15" r="1.300" /><circle cx="3" cy="9" r="1.300" /><circle cx="15" cy="9" r="1.300" /></g></g>,
  existPt: <path d="M9.500 3v13M3 9.500h13" {...GREY} />,
  onCurve: <g {...GREY}><path d="M4 14L15 3" /><circle cx="4" cy="14" r="1.200" fill={G} /></g>,
  onFace: <g><path d="M2 5c4-4 9-4 14-1l-3 5 1 6-7-1-5-3z" fill="#ececec" stroke="#b4b4b4" /><circle cx="10" cy="6" r="1.500" fill="#999" /></g>,
  grid: <path d="M3.500 2.500l9 3v11l-9-3zM6.500 3v12M9.500 4v12M3.500 6l9 3M3.500 10l9 3" {...GREY} stroke="#888" strokeWidth={1} />,
};

/* ---------- tool bars ---------- */

const Tool = styled.button`
  flex: none;
  width: ${(p) => (p.$small ? 23 : p.$compact ? 27 : 31)}px;
  height: ${(p) => (p.$small ? 31 : 33)}px;
  padding: ${(p) => (p.$small ? "7px 2px 6px 3px" : p.$compact ? "5px 1px 4px 2px" : "5px 3px 4px 4px")};
`;
const TextTool = styled.button`
  display: flex;
  flex: none;
  align-items: center;
  gap: 2px;
  width: ${(p) => p.$w}px;
  height: 33px;
  padding-left: ${(p) => p.$pad}px;
  color: ${(p) => (p.disabled ? "#b5b5b5" : "#1c1c1c")};
  white-space: nowrap;
`;
const Drop = styled.button`
  display: flex;
  flex: none;
  width: ${(p) => (p.$small ? 10 : 12)}px;
  height: ${(p) => (p.$small ? 31 : 33)}px;
  align-items: ${(p) => (p.$low ? "flex-end" : "center")};
  justify-content: center;
  padding-bottom: ${(p) => (p.$low ? 8 : 1)}px;
`;
const Sep = styled.span`
  flex: none;
  width: 1px;
  height: 26px;
  margin: 0 3px 0 2px;
  background: #d2d2d2;
`;
const Grip = styled.span`
  flex: none;
  width: 3px;
  height: 26px;
  margin: 0 3px 0 3px;
  background: repeating-linear-gradient(#b4b4b4 0 2px, #fff 2px 5px);
`;
const Bar = styled.div`
  display: flex;
  flex: none;
  align-items: center;
  height: 34px;
  border-bottom: 1px solid #dcdcdc;
  border-right: 1px solid #dcdcdc;
  ${(p) => p.$clipped && css`margin-left: ${p.$clipped}px;`}
  ${(p) => p.$right && css`margin-left: auto; margin-right: 1px;`}
`;
const BarRow = styled.div`
  display: flex;
  flex: none;
  overflow: hidden;
  background: #fff;
  ${(p) => p.$last && css`border-bottom: 1px solid #a9a9a9; height: 34px;`}
`;

const Arrow = () => (
  <svg width="5" height="3" viewBox="0 0 5 3" aria-hidden="true">
    <path d="M0 0h5L3 3H2z" fill="#111" />
  </svg>
);
const Icon = ({ name, small }) => {
  const s = small ? 18 : 24;
  return (
    <svg width={s} height={s} viewBox={`0 0 ${s} ${s}`} aria-hidden="true">
      {(small ? SMALL : ICONS)[name]}
    </svg>
  );
};

const Items = ({ list, small, compact }) =>
  list.split(" ").map((t, i) => {
    if (t === "|") return <Sep key={i} />;
    if (t === ":") return <Grip key={i} />;
    if (t === "v") return <Drop key={i} $small={small} aria-label="展开"><Arrow /></Drop>;
    if (t === "_") return <Drop key={i} $low aria-label="工具条选项"><Arrow /></Drop>;
    return (
      <Tool key={i} $small={small} $compact={compact} aria-label={t}>
        <Icon name={t} small={small} />
      </Tool>
    );
  });

/* ---------- menu strip ---------- */

const MenuStrip = styled.header`
  display: flex;
  flex: none;
  align-items: flex-end;
  justify-content: space-between;
  height: 11px;
  overflow: hidden;
  background: #c9d7d6;
`;
const Menu = styled.nav`
  display: flex;
  align-items: flex-end;
  padding-bottom: 6px;
`;
const MenuLink = styled.a`
  margin-left: 7px;
  margin-right: 7px;
  color: #1c1c1c;
  line-height: 16px;
  text-decoration: none;
  white-space: nowrap;
  u { text-underline-offset: 2px; }
`;
const WindowKeys = styled.div`
  display: flex;
  gap: 7px;
  padding-right: 9px;
  padding-bottom: 9px;
`;
const MENU = [
  ["文件", "F"], ["编辑", "E"], ["视图", "V"], ["插入", "S"], ["格式", "R"], ["工具", "T"], ["装配", "A"],
  ["产品制造信息", "M"], ["信息", "I"], ["分析", "L"], ["首选项", "P"], ["窗口", "O"], ["GC工具箱", ""], ["帮助", "H"],
];

/* ---------- fields ---------- */

const Search = styled.label`
  display: flex;
  flex: none;
  align-items: center;
  width: 125px;
  height: 20px;
  margin: 0 5px 0 4px;
  border: 1px solid #9b9b9b;
  background: #fff;
  input { flex: 1; min-width: 0; height: 16px; padding: 0 0 0 1px; border: 0; outline: 0; background: none; }
  input::placeholder { color: #1c1c1c; opacity: 1; }
  svg { margin-right: 2px; }
`;
const PickBox = styled.div`
  display: grid;
  flex: none;
  align-items: center;
  width: ${(p) => p.$w}px;
  margin-right: ${(p) => p.$gap}px;
  select, svg { grid-area: 1 / 1; }
  select { appearance: none; width: 100%; height: 20px; padding: 0 0 0 3px; border: 1px solid #9b9b9b; border-radius: 0; background: #fff; }
  svg { justify-self: end; margin-right: 6px; pointer-events: none; }
`;
const Pick = ({ label, value, w, gap }) => (
  <PickBox $w={w} $gap={gap}>
    <select aria-label={label} defaultValue={value}><option>{value}</option></select>
    <svg width="7" height="4" viewBox="0 0 7 4" aria-hidden="true"><path d="M0 0h7L4 4H3z" fill="#111" /></svg>
  </PickBox>
);
const FilterRow = styled.div`
  display: flex;
  flex: none;
  align-items: center;
  height: 32px;
  overflow: hidden;
  background: #fff;
  border-bottom: 1px solid #879294;
  > :first-child { margin-left: -8px; }
  > :last-child { margin-left: auto; margin-right: 3px; }
`;

/* ---------- main area ---------- */

const Page = styled.div`
  display: flex;
  flex-direction: column;
  height: 100vh;
  background: #fff;
`;
const Main = styled.main`
  display: flex;
  flex: 1;
  min-height: 0;
  overflow: hidden;
`;
const Side = styled.nav`
  display: flex;
  flex: none;
  flex-direction: column;
  width: 19px;
  background: #d8d8d8;
`;
const SideTab = styled.button`
  display: flex;
  flex: none;
  align-items: ${(p) => (p.$top ? "flex-start" : "center")};
  justify-content: flex-end;
  height: ${(p) => p.$h}px;
  padding-right: 2px;
  overflow: hidden;
  border-right: 1px solid ${(p) => (p.$on ? "#fff" : "#b2b2b2")};
  background: ${(p) => (p.$on ? "#fff" : "#d8d8d8")};
  ${(p) => p.$top && css`padding-top: 1px; border-bottom: 1px solid #b2b2b2;`}
`;
const SIDE = [
  ["gear", 40, "资源条选项"], ["asmNav", 46, "装配导航器"], ["conNav", 40, "约束导航器"], ["reuse", 42, "部件导航器"],
  ["books", 44, "重用库"], ["hd3d", 62, "HD3D 工具"], ["web", 46, "Web 浏览器"], ["clock", 62, "历史记录"], ["roles", 24, "角色"],
];
const SideFoot = styled.div`
  display: flex;
  flex: 1;
  flex-direction: column;
  align-items: flex-start;
  gap: 11px;
  border-right: 1px solid #b2b2b2;
`;

const Panel = styled.aside`
  display: flex;
  flex: none;
  flex-direction: column;
  width: 198px;
  padding: 0 9px 7px 6px;
  border-right: 1px solid #879294;
  background: #fff;
  font-size: 12px;
`;
const PanelTitle = styled.h1`
  display: flex;
  flex: none;
  align-items: center;
  justify-content: space-between;
  height: 28px;
  margin: 0;
  padding: 0 7px 0 4px;
  font-size: 12px;
  font-weight: 400;
`;
const TreeBox = styled.section`
  display: flex;
  flex: 1;
  flex-direction: column;
  min-height: 0;
  border: 1px solid #cdcdcd;
`;
const TreeHead = styled.div`
  display: flex;
  flex: none;
  align-items: center;
  gap: 18px;
  height: 22px;
  padding-left: 7px;
  border-top: 1px solid #fff;
  border-bottom: 1px solid #cfcfcf;
  background: #efefef;
`;
const TreeBody = styled.div`
  flex: 1;
  min-height: 0;
  overflow: hidden;
`;
const TreeRow = styled.div`
  display: flex;
  align-items: center;
  height: 20px;
  padding-left: ${(p) => (p.$level ? 25 : 6)}px;
  border-bottom: 1px solid #e8e8e8;
  background: ${(p) => (p.$odd ? "#fafafa" : "#fff")};
  overflow: hidden;
`;
const RowLabel = styled.label`
  padding-left: 3px;
  line-height: 19px;
  font-weight: ${(p) => (p.$bold ? 700 : 400)};
  white-space: nowrap;
`;
const TickBox = styled.span`
  display: grid;
  flex: none;
  width: 12px;
  height: 12px;
  margin-right: 2px;
  input, svg { grid-area: 1 / 1; }
  input { appearance: none; width: 12px; height: 12px; margin: 0; border: 1px solid #000; background: #fff; }
  svg { display: none; pointer-events: none; }
  input:checked + svg { display: block; }
`;
const ScrollTrack = styled.div`
  display: flex;
  flex: none;
  align-items: center;
  height: 17px;
  padding: 0 7px;
  background: #f0f0f0;
`;
const ScrollThumb = styled.span`
  display: grid;
  place-items: center;
  width: 45px;
  height: 15px;
  margin: 0 auto 0 8px;
  border: 1px solid #979797;
  border-radius: 1px;
  background: linear-gradient(#f4f4f4 45%, #d4d4d4 55%, #dcdcdc);
`;
const Splitter = styled.div`
  flex: none;
  height: 5px;
  margin-top: 1px;
  border: 1px solid #b2b2b2;
  background: #d9d9d9;
`;
const Fold = styled.button`
  display: flex;
  flex: none;
  align-items: center;
  justify-content: space-between;
  height: 24px;
  padding: 3px 6px 0 7px;
  border-bottom: 2px solid #cfcfcf;
  color: #2a84b4;
  font-size: 14px;
  line-height: 18px;
`;

const Guide = ({ kind }) => (
  <svg width="16" height="20" viewBox="0 0 16 20" aria-hidden="true">
    <g stroke="#8d8d8d" strokeDasharray="1 1">
      {kind !== "root" && <path d={kind === "end" ? "M4.500 0v10" : kind === "last" ? "M4.500 0v6" : "M4.500 0v20"} />}
      {kind === "root" && <path d="M4.500 15v5" />}
      <path d={kind === "mid" || kind === "end" ? "M5 10.500h8" : "M10 10.500h4"} />
    </g>
    {kind !== "mid" && kind !== "end" && (
      <g>
        <rect x="0.500" y="6.500" width="8" height="8" fill="#fff" stroke="#dadada" />
        <path d={kind === "last" ? "M2 10.500h5" : "M2 10.500h5M4.500 8v5"} stroke="#000" />
      </g>
    )}
  </svg>
);
const RowIcon = ({ kind }) => (
  <svg width="16" height="16" viewBox="0 0 16 16" aria-hidden="true">
    {kind === "folder" && (
      <g stroke="#a87a1a" strokeWidth="0.900"><path d="M1 14V4h5l1 2h6v3" fill="#ffe48a" /><path d="M1 14L4 8h12l-3 6z" fill="#f8c43c" /></g>
    )}
    {kind === "asm" && (
      <g stroke="#8c6416" strokeWidth="0.900">
        <path d="M1 3l3-2 5 1v5l-3 2-5-2z" fill="#ffdf68" /><path d="M3 9l3-2 4 1v6l-3 1-4-1z" fill="#ffd23e" />
        <path d="M8 8l3-2 5 1v6l-3 2-5-2z" fill="#ffd23e" /><path d="M8 8l5 1 3-2M13 9v6M3 9l4 1v5" fill="none" />
      </g>
    )}
    {kind === "con" && (
      <g>
        <path d="M2 0l5 3-5 3zM13 0L8 3l5 3z" fill="#1c20c4" /><path d="M7.500 0v16" stroke="#222" strokeDasharray="2 1" />
        <rect x="0.500" y="9.500" width="5" height="5" fill="#f8e64a" stroke="#6d6210" /><path d="M9 8l6 7H9z" fill="#b01c16" />
      </g>
    )}
    {kind === "part" && (
      <g stroke="#8c6416" strokeWidth="0.900">
        <path d="M2 5l4-3 8 1-3 4z" fill="#fff0a8" /><path d="M2 5l9 2v7l-8-2z" fill="#ffd85c" /><path d="M11 7l3-4v8l-3 3z" fill="#dfa52c" />
      </g>
    )}
  </svg>
);
const TREE = [
  { id: "sec", text: "截面", guide: "root", icon: "folder", check: false },
  { id: "asm", text: "管钳（顺序：New Ord", guide: "last", icon: "asm", check: true, bold: true },
  { id: "con", text: "约束", level: 1, guide: "con", icon: "con" },
  { id: "p1", text: "套圈", level: 1, guide: "mid", icon: "part", check: true },
  { id: "p2", text: "手柄杆", level: 1, guide: "mid", icon: "part", check: true },
  { id: "p3", text: "圆柱销 x 2", level: 1, guide: "mid", icon: "part", check: true },
  { id: "p4", text: "滑块", level: 1, guide: "mid", icon: "part", check: true },
  { id: "p5", text: "螺杆", level: 1, guide: "mid", icon: "part", check: true },
  { id: "p6", text: "钳座", level: 1, guide: "end", icon: "part", check: true },
];

/* ---------- graphics window ---------- */

const View = styled.section`
  position: relative;
  flex: 1;
  min-width: 0;
  background: linear-gradient(#b2b3b5 0%, #c7c8ca 23%, #dadbdc 57%, #e3e4e6 75%, #e7e8ea 100%);
`;
const Model = styled.svg`
  position: absolute;
  left: 373px;
  top: 121px;
`;
const Triad = styled.svg`
  position: absolute;
  left: 36px;
  bottom: 40px;
`;

const Vise = () => (
  <Model width="282" height="311" viewBox="0 0 282 311" role="img" aria-label="管钳">
    <path d="M125 44h30v8h-30z" fill="url(#gRod)" />
    <path d="M122 52h35v8h-35z" fill="url(#gRod)" />
    <g fill="none" stroke="#333">
      <path d="M111 5h58v36h-58z" fill="url(#gHead)" stroke="none" />
      <path d="M111 5l4-4h50l4 4z" fill="url(#gHead)" stroke="none" />
      <path d="M110 41l4 4h52l4-4z" fill="#7a7a7a" stroke="none" />
      <path d="M115 0.500h50M110 5.500h59M110 40.500h60M114 44.500h52M110 41l4 4M170 41l-4 4M115 1l-5 4M165 1l4 4" />
      <path d="M122 52.500h35" />
      <circle cx="140" cy="23" r="17.500" fill="url(#gBall)" />
    </g>
    <path
      fillRule="evenodd"
      fill="#a3a3a3"
      stroke="#333"
      d="M0.500 264.500h65c3 0 5-2 5-5v-188c0-6 5-12 12-12h115c7 0 12 6 12 12v188c0 3 2 5 5 5h65v44H0.500zM95.500 103.500h88v12h-7v113l-36.500 36-36.500-36v-113h-8z"
    />
    <path d="M122 104h35v59h-35z" fill="url(#gRod)" />
    <path d="M125 163h30v14h-30z" fill="url(#gRod)" />
    <path d="M1 265h6v43H1z" fill="url(#gEdge)" />
    <path d="M272 265h7v43h-7z" fill="url(#gEdge)" />
    <g fill="none" stroke="#333">
      <path d="M7.500 264v44M271.500 264v44M122 162.500h35" />
      <path d="M103.500 176.500h73v52l-19 18-17-9-18 9-19-18z" fill="#6d6d6d" />
      <circle cx="125" cy="199" r="4.500" fill="#5bb8fb" />
      <circle cx="154.500" cy="199" r="4.500" fill="#5bb8fb" />
    </g>
  </Model>
);

/* ---------- floating input bar and status line ---------- */

const ImeBar = styled.div`
  position: absolute;
  right: 0;
  bottom: 31px;
  display: flex;
  align-items: center;
  gap: 6px;
  width: 79px;
  height: 26px;
  padding-left: 4px;
  border-top: 1px solid #000;
  background: linear-gradient(#8f8f8f 0, #3a3a3a 36%, #151515 44%, #181818);
`;
const Status = styled.footer`
  display: flex;
  flex: none;
  justify-content: space-between;
  height: 13px;
  padding: 3px 55px 0 0;
  overflow: hidden;
  font-weight: 700;
  line-height: 14px;
  span { margin-left: -10px; }
  div { display: flex; gap: 4px; }
`;

const Stops = ({ id, colors, h, r }) => {
  const stops = colors.map((c, i) => <stop key={i} offset={i / (colors.length - 1)} stopColor={c} />);
  return r ? (
    <radialGradient id={id} cx="0.500" cy="0.300" r="0.720">{stops}</radialGradient>
  ) : (
    <linearGradient id={id} x1="0" y1="0" x2={h ? 1 : 0.3} y2={h ? 0 : 1}>{stops}</linearGradient>
  );
};
const DefsSvg = styled.svg`
  position: absolute;
`;
const Gradients = () => (
  <DefsSvg width="0" height="0" aria-hidden="true">
    <defs>
      <Stops id="gBlue" colors={["#ecf1ff", "#bccaf8", "#8598e4"]} />
      <Stops id="gOrange" colors={["#ffefc0", "#ffca7a", "#f49c54"]} />
      <Stops id="gYellow" colors={["#fff6c4", "#f0c658"]} />
      <Stops id="gPage" colors={["#fff", "#e4e7ff"]} />
      <Stops id="gSheet" colors={["#fff", "#d5e8d8"]} />
      <Stops id="gGrey" colors={["#f4f4f4", "#acacac"]} />
      <Stops id="gSteel" colors={["#eef3f7", "#a6b8c6"]} />
      <Stops id="gUndo" colors={["#4f8bd8", "#a6cdf4"]} h />
      <Stops id="gGlobe" r colors={["#d8f3ff", "#5db8e8", "#2a78c0"]} />
      <Stops id="gRainbow" colors={["#f22", "#fd0", "#2d2", "#0ad", "#33e"]} />
      <Stops id="gRod" h colors={["#787878", "#929292", "#ababab", "#9d9d9d", "#848484"]} />
      <Stops id="gHead" h colors={["#6c6c6c", "#8d8d8d", "#a9a9a9", "#a0a0a0", "#7c7c7c"]} />
      <Stops id="gEdge" h colors={["#6a6a6a", "#a2a2a2", "#868686"]} />
      <Stops id="gBall" r colors={["#ffffff", "#e8e8e8", "#c4c4c4", "#8c8c8c", "#404040"]} />
    </defs>
  </DefsSvg>
);

export default function App() {
  return (
    <Page>
      <GlobalStyle />
      <Gradients />

      <MenuStrip>
        <Menu aria-label="菜单">
          <svg width="10" height="12" viewBox="0 0 10 12" aria-hidden="true"><path d="M0 0h10v7l-6 5-4-3z" fill="#2f62d0" /></svg>
          {MENU.map(([t, k]) => (
            <MenuLink key={t} href="#">{t}{k && <>(<u>{k}</u>)</>}</MenuLink>
          ))}
        </Menu>
        <WindowKeys aria-hidden="true">
          <svg width="11" height="8"><path d="M2 6h8v2H2z" fill="#111" /></svg>
          <svg width="11" height="8"><path d="M2.500 0v7.500h7V0" fill="none" stroke="#111" /></svg>
          <svg width="11" height="8"><path d="M1 8l4-5 4 5" fill="none" stroke="#111" strokeWidth="2" /></svg>
        </WindowKeys>
      </MenuStrip>

      <BarRow>
        <Bar $clipped={-7}>
          <Items list="nx" />
          <TextTool $w={24} $pad={2}>启动</TextTool>
          <Items list="v new open save | cut copy paste | undo v redo | csysWin v | info |" />
          <Search>
            <input type="text" placeholder="查找命令" aria-label="查找命令" />
            <svg width="16" height="16" viewBox="0 0 16 16" aria-hidden="true">
              <circle cx="10" cy="6" r="4.500" fill="#fff" stroke="#555" strokeWidth="1.300" />
              <path d="M7 9l-6 5" stroke="#555" strokeWidth="3" /><path d="M6 10l-4 3.500" stroke="#fff" />
            </svg>
          </Search>
          <Items list="_" />
        </Bar>
        <Bar><Items list=": fit v shade v solid v clipA clipB v swatch v | doorOut doorPlay _" /></Bar>
        <Bar><Items list=": sheetList sheetList v orient v | handDia palette | playDia v | redDim v ruler _" /></Bar>
      </BarRow>

      <BarRow>
        <Bar $clipped={-5}>
          <Items list="sheet v extrude revolve hole boss slot pocket | pull pattern cubes6 mirrorBody unite v trim trimSheet splitBody shell offsetFace scaleBody | blend faceBlend chamfer draft facet _" />
        </Bar>
        <Bar><Items list=": surfA surfB surfC surfD fitCurve cross quilt v _" /></Bar>
        <Bar $right><Items list=": transform sheetPins sheetList | tag | checkPart checkSketch checkAsm | cubeAbc _" /></Bar>
      </BarRow>

      <FilterRow>
        <Pick label="类型过滤器" value="没有选择过滤器" w={133} gap={7} />
        <Pick label="选择范围" value="整个装配" w={140} gap={3} />
        <Items small list="asmFilter | funnelUndo snapFilter v snapUndo treeUndo | marquee v | faceSel bodySel | snapAll endPt midPt ctrlPt polePt interPt centerPt quadPt existPt onCurve onFace | grid" />
        <Items list="_" />
      </FilterRow>

      <Main>
        <Side aria-label="资源条">
          {SIDE.map(([name, h, label], i) => (
            <SideTab key={name} $h={h} $on={i === 1} $top={i === 0} aria-label={label}><Icon name={name} /></SideTab>
          ))}
          <SideFoot>
            <svg width="17" height="11" viewBox="0 0 17 11" aria-hidden="true"><path d="M0 10C4 3 9 2 16 3" fill="none" stroke="#666" strokeWidth="1.500" /></svg>
            <svg width="6" height="5" aria-hidden="true"><path d="M0 3h5L3 0H2zM0 4h6v1H0z" fill="#a2a2a2" /></svg>
            <svg width="6" height="5" aria-hidden="true"><path d="M0 3h5L3 0H2z" fill="#a2a2a2" /></svg>
            <svg width="6" height="5" aria-hidden="true"><path d="M0 1h5L3 4H2z" fill="#222" /></svg>
            <svg width="6" height="5" aria-hidden="true"><path d="M0 0h6v1H0zM0 2h5L3 5H2z" fill="#222" /></svg>
          </SideFoot>
        </Side>

        <Panel>
          <PanelTitle>
            装配导航器
            <svg width="12" height="11" aria-hidden="true"><path d="M0.500 1h11v9.500H0.500zM0 1h12" fill="none" stroke="#111" /></svg>
          </PanelTitle>
          <TreeBox aria-label="装配导航器">
            <TreeHead>
              描述性部件名
              <svg width="9" height="5" aria-hidden="true"><path d="M0 0h9L5 5H4z" fill="#222" /></svg>
            </TreeHead>
            <TreeBody>
              {TREE.map((r, i) => (
                <TreeRow key={r.id} $level={r.level} $odd={i % 2}>
                  <Guide kind={r.guide} />
                  {r.check !== undefined && (
                    <TickBox>
                      <input type="checkbox" id={r.id} defaultChecked={r.check} />
                      <svg width="12" height="12" viewBox="0 0 12 12" aria-hidden="true"><path d="M1 5l3 2 6-6 1 1-6 9H4z" fill="#e01b1b" /></svg>
                    </TickBox>
                  )}
                  <RowIcon kind={r.icon} />
                  <RowLabel htmlFor={r.id} $bold={r.bold}>{r.text}</RowLabel>
                </TreeRow>
              ))}
              {Array.from({ length: 9 }, (_, i) => <TreeRow key={i} $odd={i % 2 === 0} />)}
            </TreeBody>
            <ScrollTrack aria-hidden="true">
              <svg width="4" height="7"><path d="M4 0v7L0 4V3z" fill="#333" /></svg>
              <ScrollThumb><svg width="9" height="7"><path d="M0.500 0v7M4.500 0v7M8.500 0v7" stroke="#555" /></svg></ScrollThumb>
              <svg width="4" height="7"><path d="M0 0v7l4-3V3z" fill="#333" /></svg>
            </ScrollTrack>
          </TreeBox>
          <Splitter />
          {["预览", "相依性"].map((t) => (
            <Fold key={t}>
              {t}
              <svg width="11" height="10" viewBox="0 0 11 10" aria-hidden="true"><path d="M1 0l4.500 8L10 0" fill="none" stroke="#2a84b4" strokeWidth="2" /></svg>
            </Fold>
          ))}
        </Panel>

        <View aria-label="图形窗口">
          <Vise />
          <Triad width="50" height="48" viewBox="0 0 50 48" role="img" aria-label="坐标轴">
            <rect x="8.500" y="23.500" width="17" height="17" fill="#cfcfcf" stroke="#a9a9a9" />
            <path d="M7.500 8v30" stroke="#2a8a2c" strokeWidth="1.300" /><path d="M7.500 18v20" stroke="#2a8a2c" strokeWidth="3" /><path d="M5 18l2-5 3 5z" fill="#2a8a2c" />
            <path d="M8 41.500h28" stroke="#1e46e8" strokeWidth="2" /><path d="M31 38l5 3.500-5 3.500z" fill="#1e46e8" />
            <circle cx="7" cy="41" r="4" fill="#a8a0a0" /><path d="M4 38l6 7M10 38l-6 7" stroke="#c23a3a" strokeWidth="1.300" />
            <text x="4" y="10" fontFamily="Liberation Sans, sans-serif" fontSize="11" fill="#3da344">Y</text>
            <text x="38" y="46" fontFamily="Liberation Sans, sans-serif" fontSize="12" fill="#3860ee">Z</text>
          </Triad>
        </View>
      </Main>

      <BarRow>
        <Bar $clipped={-5}>
          <Items list="dimCube dimLen v dimAngle v weld v section v note v holeNote v fontA v findA growA _" />
        </Bar>
      </BarRow>
      <BarRow $last>
        <Bar $clipped={-5}>
          <Items list="findPart v stackWire winCubes addPart v movePart mirrorPart constrain | wrenchPart cubes3 squares | tagCube | chain routeChain treeInfo |" />
          <Items compact list="wirePair v _" />
        </Bar>
        <Bar>
          <Items list=": sketchNew" />
          <TextTool $w={78} $pad={3} disabled><Icon name="finish" />&nbsp;完成草图</TextTool>
          <Items list="profile line arc circle fillet cham rect spline point offset v | qtrim qext corner | autoDim v | geoCon symm autoCon v | convert lockPart partDown _" />
        </Bar>
      </BarRow>

      <Status>
        <span>移动光标来旋转视图</span>
        <div aria-hidden="true">
          <svg width="16" height="16"><rect x="0.500" y="0.500" width="15" height="14" fill="#e4e4e4" stroke="#b5b5b5" /><Checker s={0.65} /></svg>
          <svg width="16" height="16"><path d="M0.500 4V0.500H4M12 0.500h3.500V4" fill="none" stroke="#444" /><rect x="3.500" y="3.500" width="9" height="10" fill="#4f8ede" stroke="#333" /><path d="M4 4h8v2H4z" fill="#eee" /></svg>
        </div>
      </Status>

      <ImeBar>
        <svg width="9" height="19" aria-hidden="true">
          {[1, 5, 9, 13, 17].map((y) => <path key={y} d={`M0 ${y}h2m2 0h2m2 0h1`} stroke="#050505" strokeWidth="2" />)}
        </svg>
        <svg width="16" height="16" viewBox="0 0 16 16" role="img" aria-label="S">
          <path d="M1 2l13-2 2 14-13 2z" fill="#f2571c" />
          <path d="M12 4H7C4 4 4 8 7 8h3c3 0 3 4 0 4H5" fill="none" stroke="#fff" strokeWidth="2" />
        </svg>
        <svg width="16" height="16" viewBox="0 0 16 16" role="img" aria-label="?">
          <circle cx="8" cy="8" r="7" fill="#1526b8" stroke="#c8ccf0" />
          <text x="5" y="12" fontFamily="Liberation Sans, sans-serif" fontWeight="bold" fontSize="11" fill="#fff">?</text>
        </svg>
        <svg width="8" height="20" aria-hidden="true"><path d="M3 5h5v2H3zM3 14h5l-2 3H5z" fill="#fff" /></svg>
      </ImeBar>
    </Page>
  );
}
